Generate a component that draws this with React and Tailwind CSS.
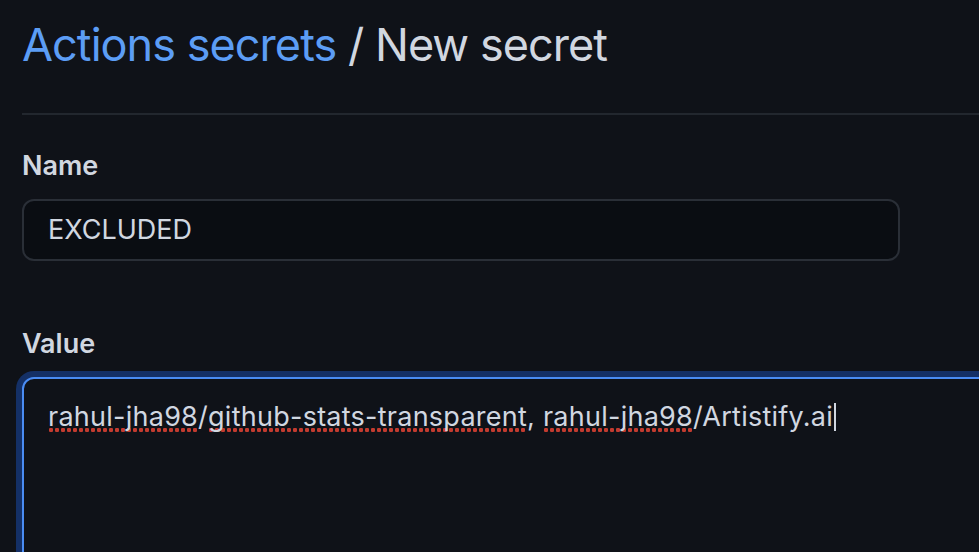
import React from 'react';

// browser spellcheck dots under "misspelled" words
const Squiggle = ({ children }) => (
  <span className="bg-[radial-gradient(circle_at_center,#c23b2f_2px,transparent_2.4px)] bg-[length:6px_6px] bg-[position:0_100%] bg-repeat-x">
    {children}
  </span>
);

const App = () => {
  return (
    <div className="h-screen w-full overflow-hidden bg-[#0f1218] pl-[22px] font-['Inter',sans-serif]">
      {/* header */}
      <h2 className="pt-[17px] text-[45px] leading-[56px] font-normal tracking-[-0.95px] text-[#d1d7e0]">
        <span className="text-[#5c9df5]">Actions secrets</span> / New secret
      </h2>
      <div className="mt-[40px] h-[2px] bg-[#22272e]" />

      {/* name field */}
      <label className="mt-[35px] block text-[27px] leading-[32px] font-semibold text-[#d1d7e0]">Name</label>
      <div className="mt-[17px] flex h-[62px] w-[878px] items-center rounded-[12px] border-2 border-[#2a2f37] bg-[#0a0d12] pl-[24px] text-[27px] leading-[32px] text-[#d1d7e0]">
        EXCLUDED
      </div>

      {/* value field */}
      <label className="mt-[67px] block text-[27px] leading-[32px] font-semibold text-[#d1d7e0]">Value</label>
      <div className="mt-[17px] h-[300px] w-[1000px] rounded-[12px] border-2 border-[#4a8cf3] bg-[#0f1218] pl-[24px] pt-[19px] text-[27px] leading-[32px] tracking-[0.25px] text-[#d1d7e0] shadow-[0_0_0_6px_#143066]">
        <Squiggle>rahul-jha98</Squiggle>/<Squiggle>github-stats-transparent</Squiggle>, <Squiggle>rahul-jha98</Squiggle>/Artistify.ai
        <span className="ml-[1px] inline-block h-[28px] w-[2px] translate-y-[5px] bg-[#d1d7e0]" />
      </div>
    </div>
  );
};

export default App;
